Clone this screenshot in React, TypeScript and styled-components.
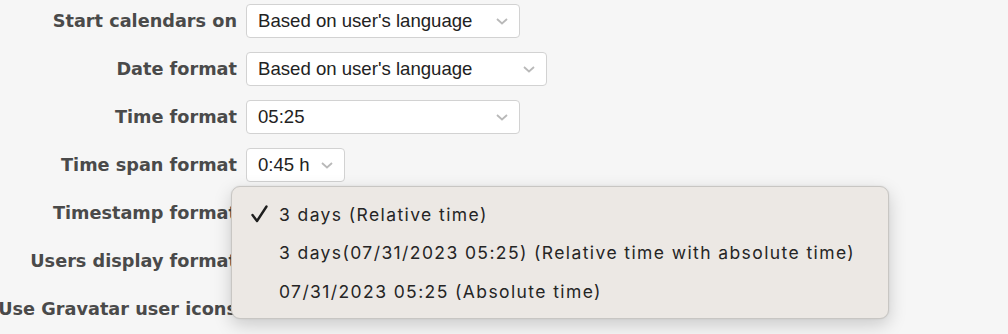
import React from 'react';
import styled, { createGlobalStyle } from 'styled-components';

const GlobalStyle = createGlobalStyle`
  html, body {
    margin: 0;
    padding: 0;
    background: #f6f6f6;
    overflow: hidden;
  }
`;

const Page = styled.div`
  position: relative;
  width: 1008px;
  height: 334px;
  background: #f6f6f6;
`;

const Form = styled.div`
  display: grid;
  grid-template-columns: 237px auto;
  column-gap: 9px;
  row-gap: 14px;
  padding-top: 4px;
  align-items: center;
  justify-items: start;
`;

const Label = styled.div`
  display: flex;
  justify-content: flex-end;
  width: 237px;
  white-space: nowrap;
  font-family: 'DejaVu Sans', Verdana, sans-serif;
  font-weight: bold;
  font-size: 17.7px;
  color: #4a4a4a;
`;

const Select = styled.div<{ $width: number }>`
  box-sizing: border-box;
  width: ${({ $width }) => $width}px;
  height: 34px;
  display: flex;
  align-items: center;
  justify-content: space-between;
  padding: 0 11px 0 11px;
  background: #fff;
  border: 1px solid #d2d2d2;
  border-radius: 4px;
  font-family: 'Liberation Sans', Arial, sans-serif;
  font-size: 18.6px;
  color: #222;
`;

const Empty = styled.div`
  height: 34px;
`;

const Chevron = () => (
  <svg width="12" height="7" viewBox="0 0 12 7">
    <path d="M1 1 L6 5.5 L11 1" fill="none" stroke="#b9b9b9" strokeWidth="1.8" />
  </svg>
);

const Menu = styled.div`
  position: absolute;
  left: 231px;
  top: 186px;
  width: 658px;
  height: 133px;
  box-sizing: border-box;
  padding: 8px 0;
  background: #ece8e4;
  border: 1px solid #c8c6c3;
  border-radius: 9px;
  box-shadow: 0 6px 18px rgba(0, 0, 0, 0.18), 0 0 2px rgba(0, 0, 0, 0.1);
  font-family: Inter, 'Liberation Sans', Arial, sans-serif;
  font-size: 17.5px;
  letter-spacing: 1.4px;
  color: #252525;
`;

const Item = styled.div`
  position: relative;
  height: 38.5px;
  display: flex;
  align-items: center;
  padding-left: 47px;
  white-space: nowrap;
`;

const Check = styled.svg`
  position: absolute;
  left: 19px;
  top: 10px;
`;

const rows: { label: string; value?: string; width?: number }[] = [
  { label: 'Start calendars on', value: "Based on user's language", width: 274 },
  { label: 'Date format', value: "Based on user's language", width: 301 },
  { label: 'Time format', value: '05:25', width: 274 },
  { label: 'Time span format', value: '0:45 h', width: 99 },
  { label: 'Timestamp format' },
  { label: 'Users display format' },
  { label: 'Use Gravatar user icons' },
];

const options = [
  { text: '3 days (Relative time)', checked: true },
  { text: '3 days(07/31/2023 05:25) (Relative time with absolute time)' },
  { text: '07/31/2023 05:25 (Absolute time)' },
];

export default function App() {
  return (
    <Page>
      <GlobalStyle />
      <Form>
        {rows.map((r) => (
          <React.Fragment key={r.label}>
            <Label>{r.label}</Label>
            {r.value ? (
              <Select $width={r.width!}>
                <span>{r.value}</span>
                <Chevron />
              </Select>
            ) : (
              <Empty />
            )}
          </React.Fragment>
        ))}
      </Form>
      <Menu>
        {options.map((o) => (
          <Item key={o.text}>
            {o.checked && (
              <Check width="17" height="18" viewBox="0 0 17 18">
                <path d="M1.5 10 L6 16 L15.5 1.5" fill="none" stroke="#1e1e1e" strokeWidth="2.4" strokeLinecap="round" strokeLinejoin="round" />
              </Check>
            )}
            {o.text}
          </Item>
        ))}
      </Menu>
    </Page>
  );
}
